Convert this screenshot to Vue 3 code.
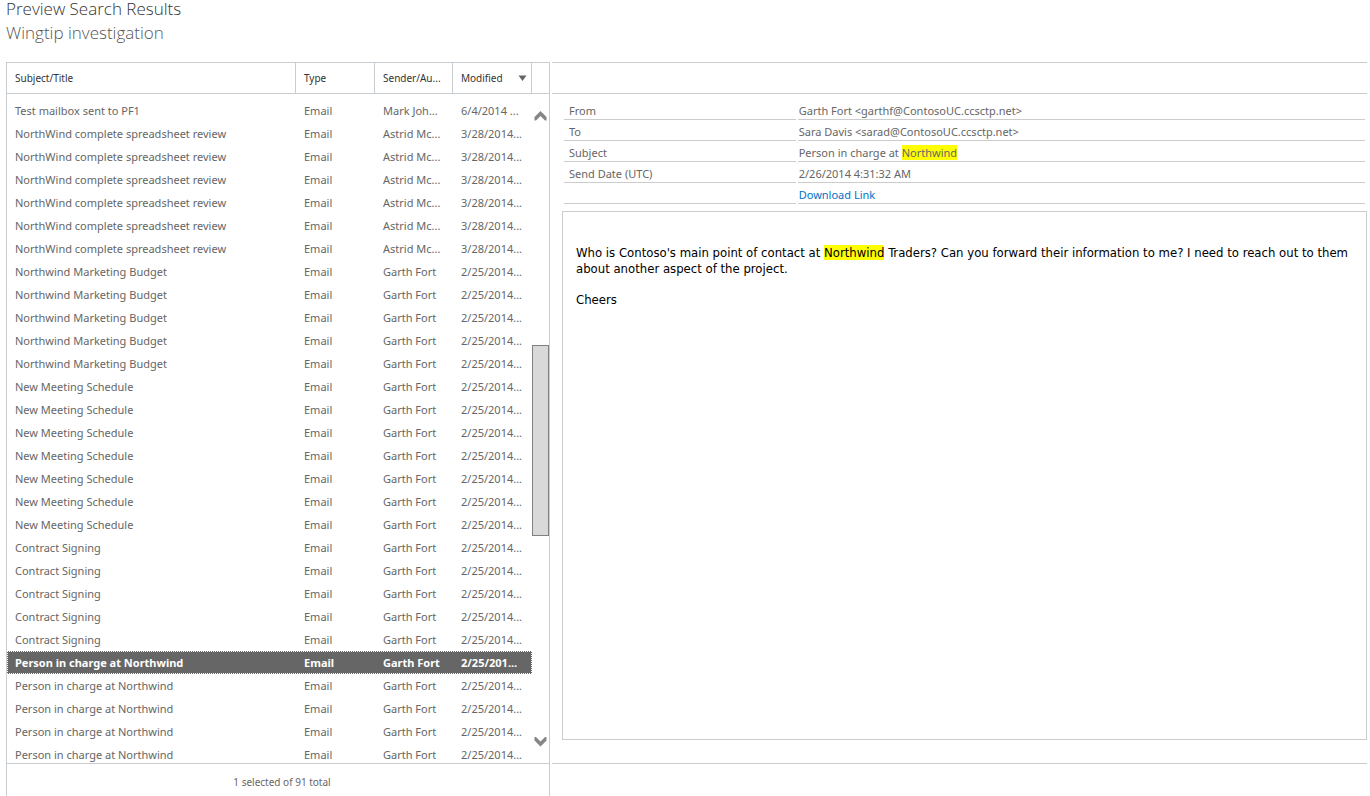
<script setup>
import { ref } from 'vue'

const repeat = (count, row) => Array.from({ length: count }, () => ({ ...row }))

const rows = [
  { subject: 'Test mailbox sent to PF1', sender: 'Mark Joh...', modified: '6/4/2014 ...' },
  ...repeat(6, { subject: 'NorthWind complete spreadsheet review', sender: 'Astrid Mc...', modified: '3/28/2014...' }),
  ...repeat(5, { subject: 'Northwind Marketing Budget', sender: 'Garth Fort', modified: '2/25/2014...' }),
  ...repeat(7, { subject: 'New Meeting Schedule', sender: 'Garth Fort', modified: '2/25/2014...' }),
  ...repeat(5, { subject: 'Contract Signing', sender: 'Garth Fort', modified: '2/25/2014...' }),
  { subject: 'Person in charge at Northwind', sender: 'Garth Fort', modified: '2/25/201...' },
  ...repeat(4, { subject: 'Person in charge at Northwind', sender: 'Garth Fort', modified: '2/25/2014...' }),
]

const selected = ref(24)
const scroll = { before: 209, thumb: 189, after: 185 }
</script>

<template>
  <main class="page">
    <header class="heading">
      <h1>Preview Search Results</h1>
      <h2>Wingtip investigation</h2>
    </header>

    <div class="panes">
      <section class="results">
        <div class="list">
          <div class="viewport">
            <table class="grid">
              <colgroup>
                <col />
                <col class="col-type" />
                <col class="col-sender" />
                <col class="col-modified" />
              </colgroup>
              <thead>
                <tr>
                  <th scope="col">Subject/Title</th>
                  <th scope="col">Type</th>
                  <th scope="col">Sender/Au...</th>
                  <th scope="col" aria-sort="descending">
                    <button type="button" class="sort">
                      Modified
                      <svg width="9" height="6" viewBox="0 0 9 6" aria-hidden="true">
                        <path d="M0.5 0.5h8L4.5 6z" fill="#666" />
                      </svg>
                    </button>
                  </th>
                </tr>
              </thead>
              <tbody>
                <tr
                  v-for="(row, i) in rows"
                  :key="i"
                  :class="{ selected: i === selected }"
                  @click="selected = i"
                >
                  <td>{{ row.subject }}</td>
                  <td>Email</td>
                  <td>{{ row.sender }}</td>
                  <td>{{ row.modified }}</td>
                </tr>
              </tbody>
            </table>
          </div>
          <div class="side">
            <div class="side-head"></div>
            <div class="scrollbar">
              <button type="button" class="arrow" aria-label="Scroll up">
                <svg width="13" height="10" viewBox="0 0 13 10" aria-hidden="true">
                  <path d="M6.5 0L12.5 6V9.5H11L6.5 5 2 9.5H0.5V6z" fill="#868686" />
                </svg>
              </button>
              <div class="track">
                <div :style="{ flexGrow: scroll.before }"></div>
                <div class="thumb" :style="{ flexGrow: scroll.thumb }"></div>
                <div :style="{ flexGrow: scroll.after }"></div>
              </div>
              <button type="button" class="arrow" aria-label="Scroll down">
                <svg width="13" height="10" viewBox="0 0 13 10" aria-hidden="true">
                  <path d="M6.5 9.5L12.5 3.5V0H11L6.5 4.5 2 0H0.5V3.5z" fill="#868686" />
                </svg>
              </button>
            </div>
          </div>
        </div>
        <footer class="status">1 selected of 91 total</footer>
      </section>

      <section class="preview">
        <div class="band"></div>
        <div class="content">
          <table class="fields">
            <tbody>
              <tr>
                <th scope="row">From</th>
                <td>Garth Fort &lt;garthf@ContosoUC.ccsctp.net&gt;</td>
              </tr>
              <tr>
                <th scope="row">To</th>
                <td>Sara Davis &lt;sarad@ContosoUC.ccsctp.net&gt;</td>
              </tr>
              <tr>
                <th scope="row">Subject</th>
                <td>Person in charge at <mark>Northwind</mark></td>
              </tr>
              <tr>
                <th scope="row">Send Date (UTC)</th>
                <td>2/26/2014 4:31:32 AM</td>
              </tr>
              <tr>
                <th></th>
                <td><a href="#">Download Link</a></td>
              </tr>
            </tbody>
          </table>
          <article class="message">
            <p>
              Who is Contoso's main point of contact at <mark>Northwind</mark> Traders? Can you
              forward their information to me? I need to reach out to them about another aspect of
              the project.
            </p>
            <p>Cheers</p>
          </article>
        </div>
        <div class="preview-foot"></div>
      </section>
    </div>
  </main>
</template>

<style>
body {
  background: #fff;
}
</style>

<style scoped>
.page {
  display: flex;
  flex-direction: column;
  box-sizing: border-box;
  height: 100vh;
  padding: 0 3px 0 6px;
  overflow: hidden;
  color: #666;
  font: 11px/16px "Noto Sans", "Open Sans", sans-serif;
}

.heading {
  height: 62px;
  flex: none;
}

h1,
h2 {
  margin: 0;
  font: 300 17px/24px "Open Sans", "Noto Sans", sans-serif;
}

h1 {
  margin-bottom: 3px;
  line-height: 18px;
  color: #333;
}

h2 {
  color: #555;
}

.panes {
  flex: 1;
  min-height: 0;
  display: grid;
  grid-template-columns: 544fr 815fr;
  gap: 2px;
}

.results {
  display: flex;
  flex-direction: column;
  min-height: 0;
  border: 1px solid #c8cdd1;
  border-bottom: 0;
}

.list {
  flex: 1;
  min-height: 0;
  display: flex;
}

.viewport {
  flex: 1;
  min-width: 0;
  overflow: hidden;
}

.grid {
  width: 100%;
  table-layout: fixed;
  border-collapse: separate;
  border-spacing: 0;
}

.col-type,
.col-modified {
  width: 79px;
}

.col-sender {
  width: 78px;
}

.grid th,
.grid td {
  box-sizing: border-box;
  padding: 0 0 0 8px;
  overflow: hidden;
  text-align: left;
  white-space: nowrap;
}

.grid th {
  height: 31px;
  border-right: 1px solid #c8cdd1;
  border-bottom: 1px solid #c8cdd1;
  color: #333;
  font-size: 10px;
  font-weight: 400;
}

.grid td {
  height: 23px;
}

.grid tbody::before {
  content: "";
  display: block;
  height: 5px;
}

.grid .selected {
  background: #666;
  color: #fff;
  font-weight: 700;
  outline: 1px dotted #fff;
  outline-offset: -1px;
}

.sort {
  display: flex;
  align-items: center;
  justify-content: space-between;
  width: 100%;
  padding: 0 4px 0 0;
  border: 0;
  background: none;
  color: inherit;
  font: inherit;
}

.side {
  width: 17px;
  flex: none;
  display: flex;
  flex-direction: column;
}

.side-head {
  height: 30px;
  border-bottom: 1px solid #c8cdd1;
}

.scrollbar {
  flex: 1;
  display: flex;
  flex-direction: column;
}

.arrow {
  display: flex;
  align-items: center;
  justify-content: center;
  height: 43px;
  padding: 0;
  border: 0;
  background: none;
}

.track {
  flex: 1;
  display: flex;
  flex-direction: column;
}

.track > div {
  flex-basis: 0;
}

.thumb {
  box-sizing: border-box;
  border: 1px solid #808080;
  background: #d9d9d9;
}

.status {
  box-sizing: border-box;
  height: 33px;
  padding: 10px 0 0 8px;
  border-top: 1px solid #c8cdd1;
  font-size: 10px;
  text-align: center;
}

.preview {
  display: flex;
  flex-direction: column;
  min-width: 0;
  min-height: 0;
}

.band {
  height: 30px;
  flex: none;
  border: 1px solid #c8cdd1;
  border-width: 1px 0;
}

.content {
  flex: 1;
  display: flex;
  flex-direction: column;
  padding: 5px 0 23px 10px;
}

.fields {
  width: 100%;
  table-layout: fixed;
  border-collapse: separate;
  border-spacing: 2px;
}

.fields th,
.fields td {
  box-sizing: border-box;
  height: 19px;
  padding: 2px 0 0 1px;
  border-bottom: 1px solid #ccc;
  text-align: left;
  font-weight: 400;
}

.fields th {
  width: 29%;
  padding-left: 5px;
}

mark {
  background: #ff0;
  color: inherit;
}

a {
  color: #0072c6;
  text-decoration: none;
}

.message {
  flex: 1;
  margin-top: 5px;
  padding: 33px 13px;
  border: 1px solid #ccc;
  color: #000;
  font: 13px/16px "DejaVu Sans Condensed", "DejaVu Sans", sans-serif;
}

.message p {
  margin: 0 0 15px;
}

.preview-foot {
  height: 32px;
  flex: none;
  border-top: 1px solid #c8cdd1;
}
</style>
